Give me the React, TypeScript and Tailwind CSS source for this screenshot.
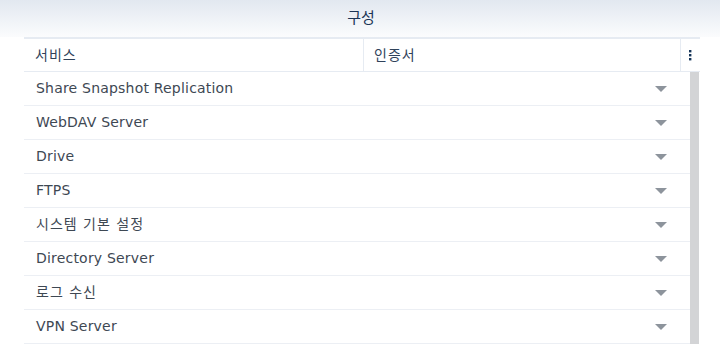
import React from "react";

const rows = [
  "Share Snapshot Replication",
  "WebDAV Server",
  "Drive",
  "FTPS",
  "시스템 기본 설정",
  "Directory Server",
  "로그 수신",
  "VPN Server",
];

const font = { fontFamily: '"DejaVu Sans", "Noto Sans CJK KR", sans-serif' };
const isKo = (s: string) => /[\uac00-\ud7a3]/.test(s);

export default function App() {
  return (
    <div className="w-[720px] h-[345px] overflow-hidden bg-white" style={font}>
      <div className="h-[37px] bg-gradient-to-b from-[#e2e8f0] to-[#fbfcfd] flex items-center justify-center">
        <span className="text-[15px] text-[#1b3556] leading-none pl-[2px]">구성</span>
      </div>
      <div className="mx-[24px] w-[676px] flex flex-col">
        <div className="h-[35px] border-t-2 border-b border-[#e6ebf2] flex text-[14px] text-[#2f425a]">
          <div className="w-[340px] border-r border-[#e6ebf2] flex items-center pl-[11px] tracking-[1px]">서비스</div>
          <div className="w-[317px] border-r border-[#e6ebf2] flex items-center pl-[10px] tracking-[1px]">인증서</div>
          <div className="flex-1 flex items-center justify-center pr-[1px]">
            <svg width="4" height="12" viewBox="0 0 4 12">
              <rect x="1" y="1" width="2.4" height="2.4" fill="#163559" />
              <rect x="1" y="5" width="2.4" height="2.4" fill="#163559" />
              <rect x="1" y="9" width="2.4" height="2.4" fill="#163559" />
            </svg>
          </div>
        </div>
        <div className="flex">
          <div className="w-[666px] flex flex-col">
            {rows.map((r) => (
              <div
                key={r}
                className="h-[34px] border-b border-[#eceff4] flex items-center justify-between pl-[12px] pr-[23px] text-[14px] text-[#3e4853]"
              >
                <span className={isKo(r) ? "tracking-[1px]" : "tracking-[0.2px]"}>{r}</span>
                <svg width="12" height="6" viewBox="0 0 12 6">
                  <polygon points="0,0 12,0 6,6" fill="#8d949c" />
                </svg>
              </div>
            ))}
          </div>
          <div className="w-[9px] bg-[#d3d4d6]" />
        </div>
      </div>
    </div>
  );
}
